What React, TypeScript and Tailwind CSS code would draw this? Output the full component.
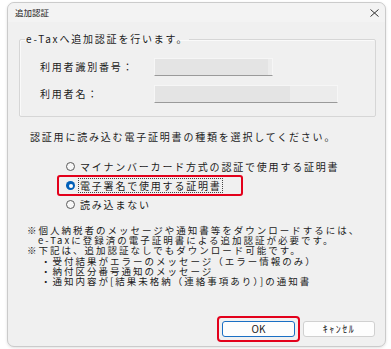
import React from 'react';

const font = "font-['Noto_Sans_CJK_JP','Noto_Sans',sans-serif]";

function Radio({ checked }: { checked?: boolean }) {
  if (checked) {
    return (
      <span className="flex h-[9px] w-[9px] shrink-0 items-center justify-center rounded-full bg-[#005fb8]">
        <span className="h-[4px] w-[4px] rounded-full bg-white" />
      </span>
    );
  }
  return <span className="h-[9px] w-[9px] shrink-0 rounded-full border border-[#5a5a5a] bg-[#f7f7f7]" />;
}

function Field({ width, fill }: { width: string; fill: string }) {
  return (
    <div className={`h-[18px] ${width} border border-[#f6f6f6] border-b-[#9a9a9a] bg-[#ececec]`}>
      <div className={`h-full ${fill} bg-[#e4e4e4]`} />
    </div>
  );
}

export default function App() {
  return (
    <div className={`h-[349px] w-[391px] bg-white pl-[7px] pt-[2px] text-[#1b1b1b] ${font}`}>
      <div className="flex h-[345px] w-[379px] flex-col rounded-[7px] border border-[#cbcbcb] bg-[#f0f0f0] shadow-[0_1px_3px_rgba(0,0,0,0.12)]">
        {/* title bar */}
        <div className="flex h-[19px] items-center justify-between rounded-t-[7px] bg-[#f3f3f3] pl-[7px] pr-[6px]">
          <span className="text-[8.5px] leading-none">追加認証</span>
          <svg width="9" height="8" viewBox="0 0 9 8" className="mt-[1px]">
            <path d="M0.5 0.5L8.5 7.5M8.5 0.5L0.5 7.5" stroke="#333" strokeWidth="1" fill="none" />
          </svg>
        </div>

        <div className="flex flex-1 flex-col text-[10px] tracking-[1.8px]">
          <fieldset className="ml-[11px] mr-[9px] mt-[10px] rounded-[2px] border border-[#d6d6d6] shadow-[inset_1px_1px_0_#fafafa]">
            <legend className="ml-[5px] px-[1px] leading-[14px]">e-Taxへ追加認証を行います。</legend>
            <div className="flex flex-col gap-[9px] pb-[13px] pl-[20px] pt-[12px]">
              <div className="flex items-center">
                <span className="w-[114px] leading-[14px]">利用者識別番号：</span>
                <Field width="w-[119px]" fill="w-[113px]" />
              </div>
              <div className="flex items-center">
                <span className="w-[114px] leading-[14px]">利用者名：</span>
                <Field width="w-[184px]" fill="w-[135px]" />
              </div>
            </div>
          </fieldset>

          <p className="mt-[13px] pl-[22px] leading-[14px]">認証用に読み込む電子証明書の種類を選択してください。</p>

          <div className="mt-[13px] flex flex-col pl-[58px]">
            <div className="flex h-[19px] items-center gap-[5px]">
              <Radio />
              <span className="leading-[14px]">マイナンバーカード方式の認証で使用する証明書</span>
            </div>
            <div className="relative flex h-[19px] items-center gap-[3px]">
              <Radio checked />
              <span className="border border-dotted border-[#444] pl-[1px] leading-[13px]">電子署名で使用する証明書</span>
              <div className="pointer-events-none absolute left-[-9px] top-[-1px] h-[21px] w-[186px] rounded-[3px] border-[2.5px] border-[#e3001b]" />
            </div>
            <div className="flex h-[19px] items-center gap-[5px]">
              <Radio />
              <span className="leading-[14px]">読み込まない</span>
            </div>
          </div>

          <div className="mt-[11px] flex flex-col pl-[19px] text-[9.5px] leading-[10.2px] tracking-[2px]">
            <span>※個人納税者のメッセージや通知書等をダウンロードするには、</span>
            <span className="pl-[11px]">e-Taxに登録済の電子証明書による追加認証が必要です。</span>
            <span>※下記は、追加認証なしでもダウンロード可能です。</span>
            <span className="pl-[14px]">・受付結果がエラーのメッセージ（エラー情報のみ）</span>
            <span className="pl-[14px]">・納付区分番号通知のメッセージ</span>
            <span className="pl-[14px]">・通知内容が[結果未格納（連絡事項あり）]の通知書</span>
          </div>

          <div className="mt-auto flex justify-end gap-[8px] pb-[9px] pr-[10px] text-[10px] tracking-normal">
            <div className="relative">
              <button className="flex h-[16px] w-[73px] items-center justify-center rounded-[3px] border border-[#1a6fc4] bg-[#fdfdfd] leading-none">
                OK
              </button>
              <div className="pointer-events-none absolute left-[-5px] top-[-5px] h-[26px] w-[83px] rounded-[4px] border-[2.5px] border-[#e3001b]" />
            </div>
            <button className="flex h-[16px] w-[72px] items-center justify-center rounded-[3px] border border-[#d0d0d0] bg-[#fdfdfd] leading-none tracking-[1.5px]">
              ｷｬﾝｾﾙ
            </button>
          </div>
        </div>
      </div>
    </div>
  );
}
